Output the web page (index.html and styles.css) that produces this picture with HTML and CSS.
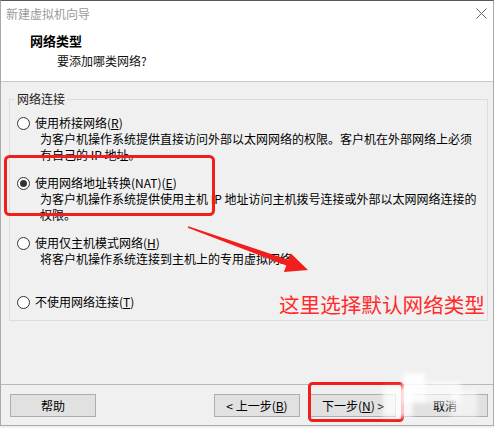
FILE: index.html
```html
<!DOCTYPE html>
<html lang="zh-CN">
<head>
<meta charset="utf-8">
<title>新建虚拟机向导</title>
<link rel="stylesheet" href="styles.css">
</head>
<body>
<div class="window">
  <div class="top">
    <div class="titlebar">
      <span class="title">新建虚拟机向导</span>
      <svg class="close" width="11" height="11" viewBox="0 0 11 11"><path d="M0.5 0.5 L10.5 10.5 M10.5 0.5 L0.5 10.5" stroke="#6a6a6a" stroke-width="1" fill="none"/></svg>
    </div>
    <div class="header">
      <div class="h1">网络类型</div>
      <div class="h2">要添加哪类网络?</div>
    </div>
  </div>
  <div class="body">
    <fieldset class="group">
      <legend>网络连接</legend>
      <div class="opt">
        <div class="opt-label"><span class="radio"></span>使用桥接网络(<u>R</u>)</div>
        <div class="desc">为客户机操作系统提供直接访问外部以太网网络的权限。客户机在外部网络上必须</div>
        <div class="desc">有自己的 IP 地址。</div>
      </div>
      <div class="opt">
        <div class="opt-label"><span class="radio checked"></span>使用网络地址转换(NAT)(<u>E</u>)</div>
        <div class="desc">为客户机操作系统提供使用主机 IP 地址访问主机拨号连接或外部以太网网络连接的</div>
        <div class="desc">权限。</div>
      </div>
      <div class="opt">
        <div class="opt-label"><span class="radio"></span>使用仅主机模式网络(<u>H</u>)</div>
        <div class="desc">将客户机操作系统连接到主机上的专用虚拟网络。</div>
      </div>
      <div class="opt last">
        <div class="opt-label"><span class="radio"></span>不使用网络连接(<u>T</u>)</div>
      </div>
    </fieldset>
  </div>
  <div class="footer">
    <button class="btn">帮助</button>
    <div class="spacer"></div>
    <button class="btn">&lt; 上一步(<u>B</u>)</button>
    <button class="btn next">下一步(<u>N</u>) &gt;</button>
    <button class="btn cancel">取消</button>
  </div>

  <svg class="annot" width="494" height="428" viewBox="0 0 494 428">
    <rect x="5.5" y="156.5" width="208" height="58" rx="4" fill="none" stroke="#f21d1d" stroke-width="3"/>
    <rect x="309.5" y="383.5" width="93" height="37" rx="3" fill="none" stroke="#f21d1d" stroke-width="3"/>
    <polygon points="188.2,226.3 288.3,259.8 290.7,253.2 308,270 283.9,272 286.3,265.4 187.8,227.7" fill="#f21d1d"/>
  </svg>
  <div class="annot-text">这里选择默认网络类型</div>
  <div class="watermark">
    <span class="wm b1"></span>
    <span class="wm b2"></span>
    <span class="wm b3"></span>
    <span class="wm b4"></span>
  </div>
</div>
</body>
</html>
```
FILE: styles.css
```css
* { box-sizing: border-box; }
html, body { margin: 0; padding: 0; }
body {
  width: 494px;
  height: 428px;
  overflow: hidden;
  background: #f0f0f0;
  font-family: "Noto Sans CJK SC", "Microsoft YaHei", sans-serif;
  font-size: 12px;
  color: #000;
}
.window {
  position: relative;
  width: 494px;
  height: 426px;
  border: 1px solid #a9a9a9;
  border-top-color: #5a5a5a;
  display: flex;
  flex-direction: column;
  background: #f0f0f0;
}
.top {
  height: 81px;
  background: #fff;
  border-bottom: 1px solid #c9c9c9;
  flex: none;
}
.titlebar {
  height: 25px;
  display: flex;
  align-items: center;
  justify-content: space-between;
  padding: 0 6px 0 5px;
}
.title {
  color: #9a9a9a;
  line-height: 18px;
}
.close { display: block; }
.header {
  padding: 6px 0 0 29px;
}
.h1 {
  font-weight: bold;
  font-size: 13px;
  line-height: 18px;
}
.h2 {
  margin: 2px 0 0 27px;
  line-height: 18px;
  color: #111;
}
.body {
  flex: 1;
  padding: 9px 5px 0 8px;
}
.group {
  margin: 0;
  border: 1px solid #dcdcdc;
  padding: 8px 0 10px 7px;
  min-width: 0;
}
.group legend {
  padding: 0 2px;
  margin-left: -2px;
  line-height: 16px;
  color: #222;
}
.opt + .opt { margin-top: 12px; }
.opt.last { margin-top: 27px; }
.opt-label {
  display: flex;
  align-items: center;
  height: 16px;
  line-height: 16px;
  white-space: nowrap;
}
.radio {
  width: 13px;
  height: 13px;
  border: 1px solid #333;
  border-radius: 50%;
  background: #fff;
  margin-right: 5px;
  flex: none;
  display: flex;
  align-items: center;
  justify-content: center;
}
.radio.checked::after {
  content: "";
  width: 7px;
  height: 7px;
  border-radius: 50%;
  background: #333;
}
.desc {
  padding-left: 23px;
  line-height: 16px;
  white-space: nowrap;
}
.footer {
  height: 41px;
  flex: none;
  border-top: 1px solid #b9b9b9;
  display: flex;
  align-items: flex-start;
  padding: 9px 5px 0 9px;
}
.spacer { flex: 1; }
.btn {
  width: 86px;
  height: 23px;
  margin: 0;
  padding: 0;
  background: #e1e1e1;
  border: 1px solid #adadad;
  font-family: inherit;
  font-size: 12px;
  color: #000;
  line-height: 21px;
}
.btn.next { margin-left: 10px; }
.btn.cancel { margin-left: 6px; }
.annot {
  position: absolute;
  left: -1px;
  top: -1px;
  pointer-events: none;
}
.annot-text {
  position: absolute;
  left: 278px;
  top: 290px;
  font-size: 20.6px;
  line-height: 26px;
  color: #ff2b2b;
  white-space: nowrap;
}
.watermark {
  position: absolute;
  left: 380px;
  top: 372px;
  width: 100px;
  height: 48px;
}
.wm {
  position: absolute;
  background: rgba(255, 255, 255, 0.75);
  filter: blur(2px);
}
.b1 { left: 22px; top: 0; width: 22px; height: 30px; background: rgba(255,255,255,0.85); }
.b2 { left: 2px; top: 14px; width: 30px; height: 30px; }
.b3 { left: 40px; top: 8px; width: 40px; height: 22px; background: rgba(255,255,255,0.6); }
.b4 { left: 70px; top: 18px; width: 26px; height: 26px; background: rgba(255,255,255,0.55); }
```
